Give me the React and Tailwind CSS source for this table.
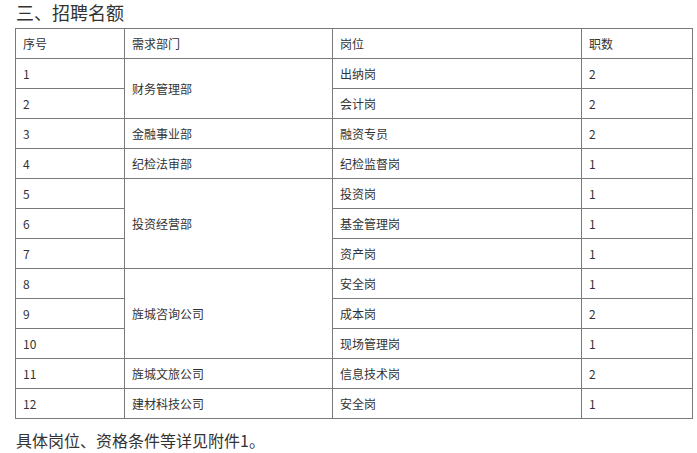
const rows = [
  { no: "1", dept: "财务管理部", span: 2, post: "出纳岗", num: "2" },
  { no: "2", post: "会计岗", num: "2" },
  { no: "3", dept: "金融事业部", span: 1, post: "融资专员", num: "2" },
  { no: "4", dept: "纪检法审部", span: 1, post: "纪检监督岗", num: "1" },
  { no: "5", dept: "投资经营部", span: 3, post: "投资岗", num: "1" },
  { no: "6", post: "基金管理岗", num: "1" },
  { no: "7", post: "资产岗", num: "1" },
  { no: "8", dept: "旌城咨询公司", span: 3, post: "安全岗", num: "1" },
  { no: "9", post: "成本岗", num: "2" },
  { no: "10", post: "现场管理岗", num: "1" },
  { no: "11", dept: "旌城文旅公司", span: 1, post: "信息技术岗", num: "2" },
  { no: "12", dept: "建材科技公司", span: 1, post: "安全岗", num: "1" },
];

const cell = "border border-[#7a7a7a] px-[7px] h-[30px] text-left align-middle font-normal";

export default function App() {
  return (
    <div
      className="bg-white text-[#333] w-[697px] h-[453px] overflow-hidden"
      style={{ fontFamily: '"Microsoft YaHei", "Noto Sans CJK SC", sans-serif' }}
    >
      <h2 className="pl-[16px] h-[28px] leading-[24px] text-[18px] font-normal">三、招聘名额</h2>
      <table className="ml-[15px] w-[677px] border-collapse table-fixed text-[12px]">
        <colgroup>
          <col className="w-[109px]" />
          <col className="w-[208px]" />
          <col className="w-[249px]" />
          <col className="w-[111px]" />
        </colgroup>
        <thead>
          <tr>
            <th className={cell}>序号</th>
            <th className={cell}>需求部门</th>
            <th className={cell}>岗位</th>
            <th className={cell}>职数</th>
          </tr>
        </thead>
        <tbody>
          {rows.map((r) => (
            <tr key={r.no}>
              <td className={cell}>{r.no}</td>
              {r.dept && (
                <td className={cell} rowSpan={r.span}>
                  {r.dept}
                </td>
              )}
              <td className={cell}>{r.post}</td>
              <td className={cell}>{r.num}</td>
            </tr>
          ))}
        </tbody>
      </table>
      <p className="pl-[16px] mt-[9px] text-[16px] leading-[24px]">具体岗位、资格条件等详见附件1。</p>
    </div>
  );
}
